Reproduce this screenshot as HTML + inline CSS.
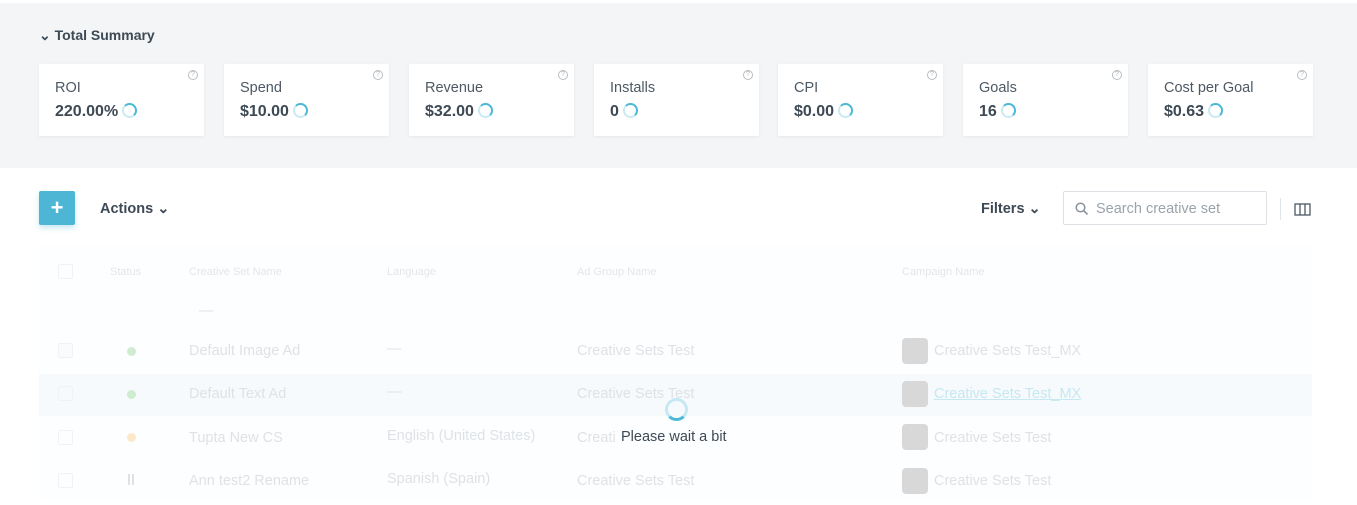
<!DOCTYPE html><html><head><style>
*{margin:0;padding:0;box-sizing:border-box}
body{width:1357px;height:505px;overflow:hidden;background:#fff;font-family:"Liberation Sans",sans-serif;position:relative;color:#3f4b57}
.band{position:absolute;left:0;top:3px;width:1357px;height:165px;background:#f3f5f7}
.abs{position:absolute;white-space:nowrap}
.card{position:absolute;top:64px;width:165px;height:72px;background:#fff;box-shadow:0 1px 3px rgba(0,0,0,.06)}
.card .l{position:absolute;left:16px;top:16px;font-size:14.5px;color:#4d5964}
.card .v{position:absolute;left:16px;top:39px;font-size:16px;font-weight:bold;color:#3d4954}
.card .v i{display:inline-block;width:15px;height:15px;border:2px solid #c9eaf3;border-right-color:#4bb8d6;border-top-color:#4bb8d6;border-radius:50%;margin-left:4px;vertical-align:-2px}
.card .q{position:absolute;right:6px;top:6px;width:10px;height:10px;border:1px solid #b9bec3;border-radius:50%;font-size:7px;color:#b0b5ba;text-align:center;line-height:8px}
.h{font-size:11px;color:#e3e6e9}
.c{font-size:14.5px;color:#dfe2e5}
.cb{position:absolute;left:58px;width:15px;height:15px;border:1px solid #f0f2f4;border-radius:2px}
.dot{position:absolute;left:127px;width:9px;height:9px;border-radius:50%}
.ico{position:absolute;left:902px;width:26px;height:26px;border-radius:4px;background:#d8d8d8}
</style></head><body>
<div class="band"></div>
<div class="abs" style="left:39px;top:27px;font-size:14px;font-weight:bold;color:#3d4954">⌄ Total Summary</div>
<div class="card" style="left:39px"><div class="l">ROI</div><div class="v">220.00%<i></i></div><div class="q">?</div></div>
<div class="card" style="left:224px"><div class="l">Spend</div><div class="v">$10.00<i></i></div><div class="q">?</div></div>
<div class="card" style="left:409px"><div class="l">Revenue</div><div class="v">$32.00<i></i></div><div class="q">?</div></div>
<div class="card" style="left:594px"><div class="l">Installs</div><div class="v">0<i></i></div><div class="q">?</div></div>
<div class="card" style="left:778px"><div class="l">CPI</div><div class="v">$0.00<i></i></div><div class="q">?</div></div>
<div class="card" style="left:963px"><div class="l">Goals</div><div class="v">16<i></i></div><div class="q">?</div></div>
<div class="card" style="left:1148px"><div class="l">Cost per Goal</div><div class="v">$0.63<i></i></div><div class="q">?</div></div>

<div class="abs" style="left:39px;top:191px;width:36px;height:34px;background:#4cb6d4;border-radius:2px;box-shadow:0 3px 6px rgba(76,182,212,.3);color:#fff;font-size:22px;font-weight:bold;text-align:center;line-height:33px">+</div>
<div class="abs" style="left:100px;top:201px;font-size:14.5px;font-weight:bold;color:#3d4954">Actions ⌄</div>
<div class="abs" style="left:981px;top:201px;font-size:14.5px;font-weight:bold;color:#3d4954">Filters ⌄</div>
<div class="abs" style="left:1063px;top:191px;width:204px;height:34px;border:1px solid #dde1e5;border-radius:2px"></div>
<svg class="abs" style="left:1075px;top:202px" width="14" height="14" viewBox="0 0 14 14"><circle cx="5.5" cy="5.5" r="4.3" fill="none" stroke="#8a949d" stroke-width="1.5"/><path d="M8.7 8.7L12.5 12.5" stroke="#8a949d" stroke-width="1.6"/></svg>
<div class="abs" style="left:1096px;top:201px;font-size:14.5px;color:#9aa3ab">Search creative set</div>
<div class="abs" style="left:1280px;top:198px;width:1px;height:22px;background:#e2e5e8"></div>
<svg class="abs" style="left:1294px;top:203px" width="18" height="13" viewBox="0 0 18 13"><rect x="1" y="1" width="15" height="11" fill="none" stroke="#4d5964" stroke-width="1.3"/><path d="M6 1V12M11 1V12" stroke="#4d5964" stroke-width="1.3"/></svg>

<div class="abs" style="left:39px;top:245px;width:1273px;height:255px;background:#fdfeff"></div>
<div class="abs" style="left:39px;top:374px;width:1273px;height:42px;background:#f6fafc"></div>
<div class="cb" style="top:264px"></div>
<div class="abs h" style="left:110px;top:266px">Status</div>
<div class="abs h" style="left:189px;top:266px">Creative Set Name</div>
<div class="abs h" style="left:387px;top:266px">Language</div>
<div class="abs h" style="left:577px;top:266px">Ad Group Name</div>
<div class="abs h" style="left:902px;top:266px">Campaign Name</div>
<div class="abs c" style="left:199px;top:303px">—</div>

<div class="cb" style="top:343px;background:#fafbfc"></div><div class="dot" style="top:347px;background:#d0ecd0"></div>
<div class="abs c" style="left:189px;top:343px">Default Image Ad</div><div class="abs c" style="left:387px;top:341px">—</div>
<div class="abs c" style="left:577px;top:343px">Creative Sets Test</div><div class="ico" style="top:338px"></div><div class="abs c" style="left:934px;top:343px">Creative Sets Test_MX</div>

<div class="cb" style="top:386px"></div><div class="dot" style="top:390px;background:#d0ecd0"></div>
<div class="abs c" style="left:189px;top:386px">Default Text Ad</div><div class="abs c" style="left:387px;top:384px">—</div>
<div class="abs c" style="left:577px;top:386px">Creative Sets Test</div><div class="ico" style="top:381px"></div><div class="abs c" style="left:934px;top:386px;color:#c5e8f2;text-decoration:underline">Creative Sets Test_MX</div>

<div class="cb" style="top:430px"></div><div class="dot" style="top:433px;background:#fbe8c8"></div>
<div class="abs c" style="left:189px;top:430px">Tupta New CS</div><div class="abs c" style="left:387px;top:428px">English (United States)</div>
<div class="abs c" style="left:577px;top:430px">Creati</div><div class="ico" style="top:424px"></div><div class="abs c" style="left:934px;top:430px">Creative Sets Test</div>

<div class="cb" style="top:473px"></div><div class="abs c" style="left:127px;top:473px;font-weight:bold">ll</div>
<div class="abs c" style="left:189px;top:473px">Ann test2 Rename</div><div class="abs c" style="left:387px;top:471px">Spanish (Spain)</div>
<div class="abs c" style="left:577px;top:473px">Creative Sets Test</div><div class="ico" style="top:468px"></div><div class="abs c" style="left:934px;top:473px">Creative Sets Test</div>

<div class="abs" style="left:665px;top:398px;width:23px;height:23px;border:3px solid #c6e8f2;border-bottom-color:#4bb8d6;border-radius:50%"></div>
<div class="abs" style="left:621px;top:429px;font-size:14.5px;color:#3d4954">Please wait a bit</div>
</body></html>
